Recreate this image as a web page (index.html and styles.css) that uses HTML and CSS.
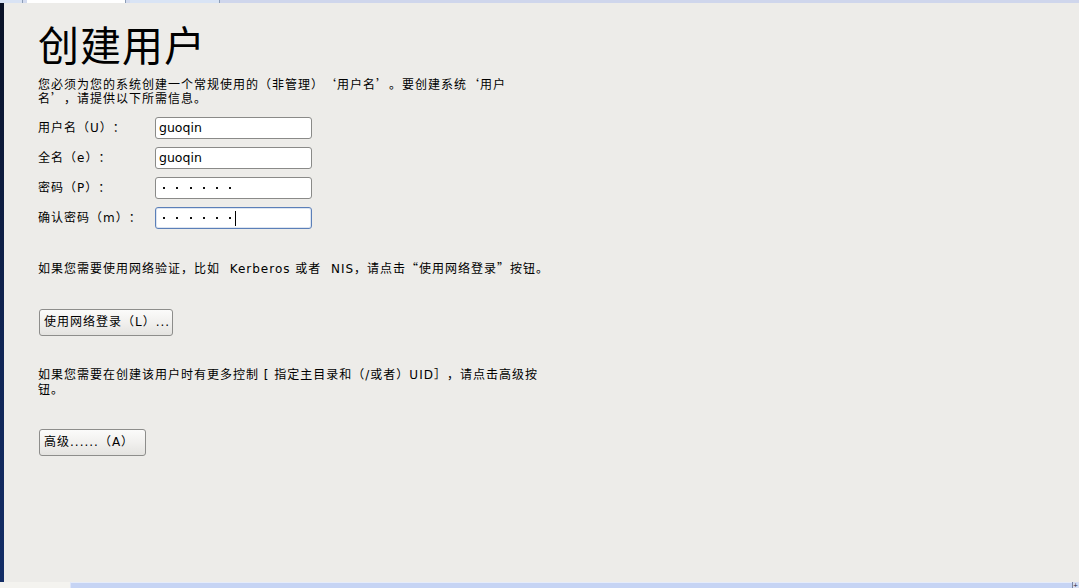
FILE: index.html
```html
<!DOCTYPE html>
<html lang="zh-CN">
<head>
<meta charset="utf-8">
<title>创建用户</title>
<link rel="stylesheet" href="styles.css">
</head>
<body>
<div class="tabs">
  <div class="tab tab-a"></div>
  <div class="tab-sep"></div>
  <div class="tab tab-gap"></div>
  <div class="tab tab-active"></div>
  <div class="tab-sep"></div>
  <div class="tab tab-gap"></div>
  <div class="tab tab-b"></div>
  <div class="tab-sep"></div>
  <div class="tab tab-rest"></div>
</div>
<div class="main">
  <div class="sidebar"></div>
  <div class="content">
    <h1 class="title">创建用户</h1>
    <p class="desc">您必须为您的系统创建一个常规使用的（非管理）<span class="q">‘</span>用户名<span class="q">’</span>。要创建系统<span class="q">‘</span>用户<br>名<span class="q">’</span>，请提供以下所需信息。</p>
    <div class="form">
      <div class="row">
        <label class="label">用户名（U）：</label>
        <div class="input">guoqin</div>
      </div>
      <div class="row">
        <label class="label">全名（e）：</label>
        <div class="input">guoqin</div>
      </div>
      <div class="row">
        <label class="label">密码（P）：</label>
        <div class="input pw"><span class="dot"></span><span class="dot"></span><span class="dot"></span><span class="dot"></span><span class="dot"></span><span class="dot"></span></div>
      </div>
      <div class="row">
        <label class="label">确认密码（m）：</label>
        <div class="input pw focus"><span class="dot"></span><span class="dot"></span><span class="dot"></span><span class="dot"></span><span class="dot"></span><span class="dot"></span><span class="caret"></span></div>
      </div>
    </div>
    <p class="note note-net">如果您需要使用网络验证，比如&nbsp; Kerberos 或者&nbsp; NIS，请点击<span class="q">“</span>使用网络登录<span class="q">”</span>按钮。</p>
    <button class="btn btn-net">使用网络登录（L）...</button>
    <p class="note note-adv">如果您需要在创建该用户时有更多控制 [ 指定主目录和（/或者）UID］，请点击高级按<br>钮。</p>
    <button class="btn btn-adv">高级......（A）</button>
  </div>
</div>
<div class="bottom">
  <div class="bottom-left"></div>
  <div class="scroll"></div>
  <div class="scroll-end">+</div>
</div>
</body>
</html>
```

FILE: styles.css
```css
html, body {
  margin: 0;
  padding: 0;
}
body {
  width: 1079px;
  height: 588px;
  overflow: hidden;
  background: #edece9;
  font-family: "DejaVu Sans", "Noto Sans CJK SC", sans-serif;
  color: #000;
  text-spacing-trim: space-all;
}
.tabs {
  display: flex;
  height: 3px;
}
.tab { height: 3px; }
.tab-a { width: 22px; background: #d9e3f4; }
.tab-sep { width: 1px; background: #8c9db6; }
.tab-gap { width: 4px; background: #d3dbef; }
.tab-active { width: 98px; background: #ffffff; }
.tab-b { width: 89px; background: #d9e4f5; }
.tab-rest { flex: 1; background: #cfd6ec; }

.main {
  display: flex;
  height: 579px;
}
.sidebar {
  width: 4px;
  background: linear-gradient(#0a1226, #102555 60%, #132d66);
}
.content {
  flex: 1;
  padding-left: 34px;
  padding-top: 18px;
}
.title {
  margin: 0;
  font-family: "Noto Sans CJK SC", sans-serif;
  font-weight: normal;
  font-size: 41px;
  line-height: 44px;
  letter-spacing: 1px;
  height: 57px;
}
.desc, .note, .label, .btn {
  font-family: "DejaVu Sans", "Noto Sans CJK SC", sans-serif;
  text-spacing-trim: space-all;
  letter-spacing: 1px;
}
.q {
  font-family: "Noto Sans CJK SC", sans-serif;
  font-feature-settings: "fwid" 1;
  line-height: 1px;
}
.desc, .note {
  margin: 0;
  font-size: 12px;
  line-height: 14px;
}
.desc {
  height: 28px;
  margin-bottom: 11px;
}
.form {
  display: flex;
  flex-direction: column;
  gap: 8px;
}
.row {
  display: flex;
  align-items: center;
  height: 22px;
}
.label {
  width: 117px;
  font-size: 12px;
  line-height: 22px;
}
.input {
  box-sizing: border-box;
  width: 157px;
  height: 22px;
  border: 1px solid #8a8a88;
  border-radius: 3px;
  background: #fff;
  padding: 0 3px;
  font-family: "DejaVu Sans", sans-serif;
  font-size: 12.5px;
  line-height: 20px;
  display: flex;
  align-items: center;
}
.input.focus {
  border-color: #5b7fb8;
  box-shadow: inset 0 0 0 1px rgba(120,150,200,0.25);
}
.pw {
  padding-left: 7px;
}
.dot {
  width: 2px;
  height: 2px;
  background: #111;
  margin-right: 11.3px;
}
.caret {
  width: 1px;
  height: 15px;
  background: #000;
  margin-left: -8px;
}
.note-net {
  height: 14px;
  margin-top: 33px;
  margin-bottom: 33px;
}
.note-adv {
  height: 30px;
  margin-top: 32px;
  margin-bottom: 31px;
  line-height: 15px;
}
.btn {
  display: block;
  box-sizing: border-box;
  height: 27px;
  margin: 0 0 0 1px;
  padding: 0 0 0 4px;
  text-align: left;
  white-space: nowrap;
  overflow: hidden;
  border: 1px solid #8d8d8b;
  border-radius: 3px;
  background: linear-gradient(#fbfbfa, #f1f0ee 50%, #e4e3e0);
  font-size: 12px;
  line-height: 25px;
  color: #000;
}
.btn-net { width: 134px; }
.btn-adv { width: 107px; }

.bottom {
  display: flex;
  height: 6px;
}
.bottom-left {
  width: 70px;
  background: #f4f3ef;
}
.scroll {
  flex: 1;
  background: #c6d4f4;
  border-top: 1px solid #e6ecfa;
  border-left: 1px solid #dde5f8;
}
.scroll-end {
  width: 6px;
  font-size: 6px;
  line-height: 6px;
  color: #223;
  background: #d6def3;
  border-left: 1px solid #7a86a0;
  overflow: hidden;
}
```
